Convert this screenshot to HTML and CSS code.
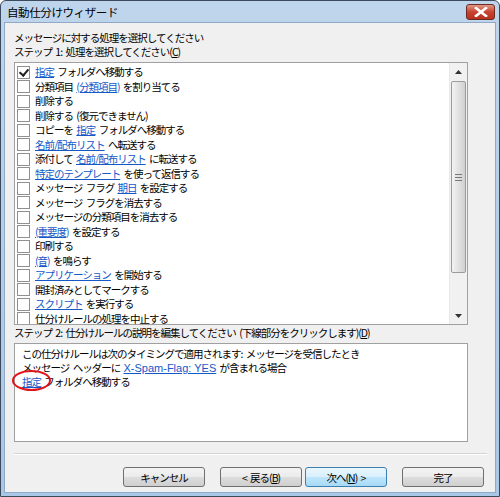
FILE: index.html
```html
<!DOCTYPE html>
<html lang="ja">
<head>
  <meta charset="UTF-8">
  <title>自動仕分けウィザード</title>
  <link rel="stylesheet" href="styles.css">
</head>
<body>

  <div class="ventana">
    <div class="titulo">
      <span>自動仕分けウィザード</span>
      <div class="cerrar">
        <svg width="14" height="10" viewBox="0 0 14 10">
          <path d="M2 1 L12 9 M12 1 L2 9" stroke="#fff" stroke-width="2.6" stroke-linecap="square"/>
        </svg>
      </div>
    </div>

    <div class="cuerpo">
      <div class="etiqueta">メッセージに対する処理を選択してください</div>
      <div class="etiqueta">ステップ 1: 処理を選択してください(<u>C</u>)</div>

      <div class="lista">
        <div class="filas">
          <div class="fila"><span class="caja marcada"></span><a>指定</a> フォルダへ移動する</div>
          <div class="fila"><span class="caja"></span>分類項目 <a>(分類項目)</a> を割り当てる</div>
          <div class="fila"><span class="caja"></span>削除する</div>
          <div class="fila"><span class="caja"></span>削除する (復元できません)</div>
          <div class="fila"><span class="caja"></span>コピーを <a>指定</a> フォルダへ移動する</div>
          <div class="fila"><span class="caja"></span><a>名前/配布リスト</a> へ転送する</div>
          <div class="fila"><span class="caja"></span>添付して <a>名前/配布リスト</a> に転送する</div>
          <div class="fila"><span class="caja"></span><a>特定のテンプレート</a> を使って返信する</div>
          <div class="fila"><span class="caja"></span>メッセージ フラグ <a>期日</a> を設定する</div>
          <div class="fila"><span class="caja"></span>メッセージ フラグを消去する</div>
          <div class="fila"><span class="caja"></span>メッセージの分類項目を消去する</div>
          <div class="fila"><span class="caja"></span><a>(重要度)</a> を設定する</div>
          <div class="fila"><span class="caja"></span>印刷する</div>
          <div class="fila"><span class="caja"></span><a>(音)</a> を鳴らす</div>
          <div class="fila"><span class="caja"></span><a>アプリケーション</a> を開始する</div>
          <div class="fila"><span class="caja"></span>開封済みとしてマークする</div>
          <div class="fila"><span class="caja"></span><a>スクリプト</a> を実行する</div>
          <div class="fila"><span class="caja"></span>仕分けルールの処理を中止する</div>
        </div>
        <div class="scroll">
          <div class="flecha">
            <svg width="7" height="4" viewBox="0 0 7 4"><path d="M0 4 L3.5 0 L7 4 Z" fill="#333"/></svg>
          </div>
          <div class="pista">
            <div class="pulgar">
              <svg width="7" height="7" viewBox="0 0 7 7">
                <path d="M0 0.5 H7 M0 3.5 H7 M0 6.5 H7" stroke="#777" stroke-width="1"/>
              </svg>
            </div>
          </div>
          <div class="flecha">
            <svg width="7" height="4" viewBox="0 0 7 4"><path d="M0 0 L3.5 4 L7 0 Z" fill="#333"/></svg>
          </div>
        </div>
      </div>

      <div class="etiqueta paso2">ステップ 2: 仕分けルールの説明を編集してください (下線部分をクリックします)(<u>D</u>)</div>

      <div class="descripcion">
        <div>この仕分けルールは次のタイミングで適用されます: メッセージを受信したとき</div>
        <div>メッセージ ヘッダーに <a class="lat">X-Spam-Flag: YES</a> が含まれる場合</div>
        <div><span class="marca"><a>指定</a></span> フォルダへ移動する</div>
      </div>

      <div class="separador"></div>

      <div class="botones">
        <button class="btn">キャンセル</button>
        <button class="btn btn-atras">&lt; 戻る(<u>B</u>)</button>
        <button class="btn btn-def">次へ(<u>N</u>) &gt;</button>
        <button class="btn btn-fin">完了</button>
      </div>
    </div>
  </div>

</body>
</html>
```

FILE: styles.css
```css
body {
  margin: 0;
  font-family: "Noto Sans CJK JP", "Liberation Sans", sans-serif;
  font-size: 10.5px;
  letter-spacing: -1px;
  word-spacing: 2px;
  color: #000;
  background: #fff;
}

.ventana {
  width: 500px;
  height: 497px;
  box-sizing: border-box;
  border: 1px solid #3b4a5c;
  border-radius: 6px 6px 0 0;
  background: linear-gradient(#bfd5ec, #a9c7e6);
  display: flex;
  flex-direction: column;
  overflow: hidden;
}

.titulo {
  height: 21px;
  display: flex;
  justify-content: space-between;
  align-items: center;
  padding: 0 4px 0 6px;
  font-size: 11.5px;
  letter-spacing: -0.4px;
}

.cerrar {
  width: 27px;
  height: 14px;
  margin-top: 1px;
  border: 1px solid #6b2a22;
  border-radius: 3px;
  background: linear-gradient(#e39a8a, #c7432f 50%, #b8321f);
  display: flex;
  align-items: center;
  justify-content: center;
}

.cuerpo {
  flex: 1;
  margin: 0 3px 3px 3px;
  border: 1px solid #8fa9c6;
  background: #f0f0f0;
  padding: 8px 27px 0 9px;
  display: flex;
  flex-direction: column;
}

.etiqueta {
  line-height: 14px;
  white-space: nowrap;
}

.paso2 {
  margin-top: 1px;
}

u {
  text-decoration: underline;
}

a {
  color: #1558c8;
  text-decoration: underline;
}

.lat {
  font-family: "Liberation Sans", sans-serif;
  font-size: 11px;
  letter-spacing: 0;
  word-spacing: 0;
}

.lista {
  margin-top: 3px;
  height: 263px;
  box-sizing: border-box;
  border: 1px solid #a0a0a0;
  background: #fff;
  display: flex;
  overflow: hidden;
}

.filas {
  flex: 1;
  padding: 2px 0 0 2px;
}

.fila {
  height: 14.5px;
  line-height: 14.5px;
  display: flex;
  align-items: center;
  white-space: pre;
}

.caja {
  width: 11px;
  height: 11px;
  border: 1px solid #8e8f8f;
  background: #fff;
  margin-right: 5px;
  position: relative;
}

.caja.marcada::after {
  content: "";
  position: absolute;
  left: 3px;
  top: 0;
  width: 4px;
  height: 7px;
  border: solid #222;
  border-width: 0 2px 2px 0;
  transform: rotate(40deg);
}

.scroll {
  width: 17px;
  display: flex;
  flex-direction: column;
  background: #f1f1f1;
  border-left: 1px solid #e8e8e8;
}

.flecha {
  height: 17px;
  display: flex;
  align-items: center;
  justify-content: center;
}

.pista {
  flex: 1;
  display: flex;
  flex-direction: column;
}

.pulgar {
  margin: 1px 1px 0 1px;
  height: 190px;
  border: 1px solid #9b9b9b;
  border-radius: 2px;
  background: linear-gradient(90deg, #f3f3f3, #dedede 60%, #d0d0d0);
  display: flex;
  align-items: center;
  justify-content: center;
}

.descripcion {
  margin-top: 3px;
  height: 99px;
  box-sizing: border-box;
  border: 1px solid #a0a0a0;
  background: #fff;
  padding: 3px 0 0 7px;
  line-height: 14px;
  white-space: nowrap;
}

.marca {
  position: relative;
}

.marca::after {
  content: "";
  position: absolute;
  left: -10px;
  top: -4px;
  width: 39px;
  height: 21px;
  box-sizing: border-box;
  border: 2.5px solid #e0141a;
  border-radius: 50%;
}

.separador {
  margin: 11px -19px 0 0;
  height: 1px;
  background: #d5d5d5;
  border-bottom: 1px solid #fff;
}

.botones {
  margin: 12px -16px 0 0;
  display: flex;
  justify-content: flex-end;
}

.btn {
  width: 82px;
  height: 20px;
  font-family: inherit;
  font-size: 10.5px;
  letter-spacing: -1px;
  word-spacing: 2px;
  padding: 0;
  border: 1px solid #707070;
  border-radius: 3px;
  background: linear-gradient(#f3f3f3, #ebebeb 50%, #dddddd 51%, #cfcfcf);
  color: #000;
}

.btn-atras {
  margin-left: 15px;
}

.btn-def {
  margin-left: 3px;
  border-color: #3c7fb1;
  background: linear-gradient(#eaf6fd, #d9f0fc 50%, #bee6fd 51%, #a7d9f5);
}

.btn-fin {
  margin-left: 15px;
}
```
